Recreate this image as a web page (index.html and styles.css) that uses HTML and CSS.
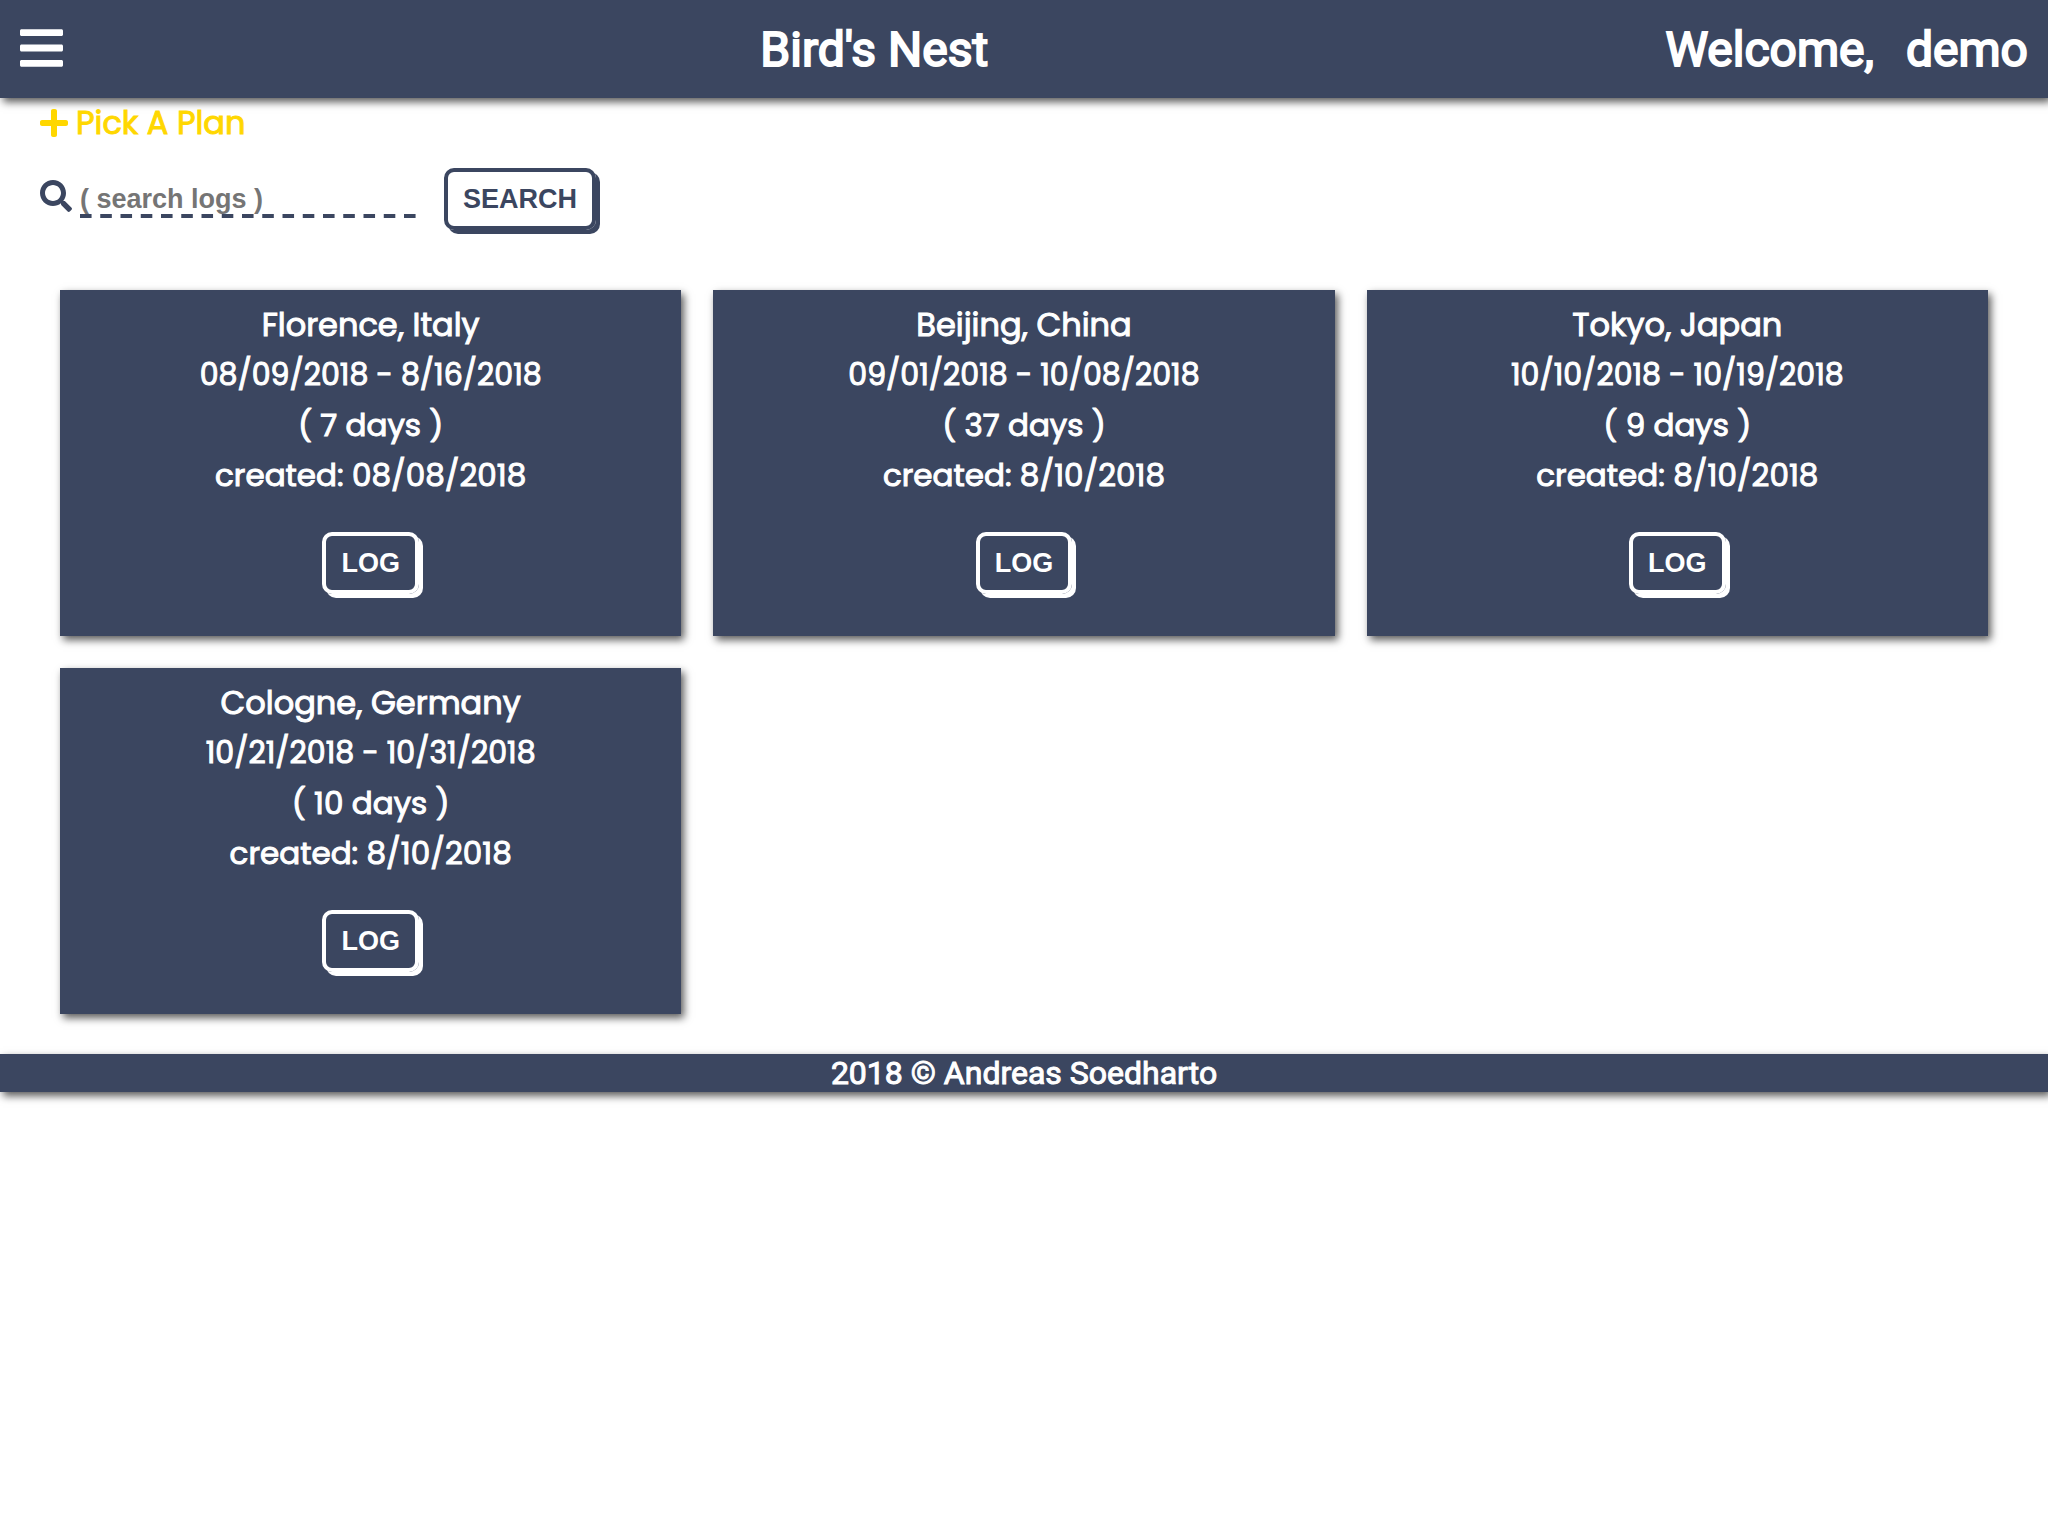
FILE: index.html
```html
<!DOCTYPE html>
<html lang="en">
<head>
<meta charset="utf-8">
<meta name="viewport" content="width=device-width, initial-scale=1">
<title>Bird's Nest</title>
<link rel="stylesheet" href="styles.css">
</head>
<body>
<header class="header">
  <button class="menu" type="button" aria-label="Menu">
    <svg class="menu-icon" viewBox="0 0 448 512" aria-hidden="true"><path d="M16 132h416c8.837 0 16-7.163 16-16V76c0-8.837-7.163-16-16-16H16C7.163 60 0 67.163 0 76v40c0 8.837 7.163 16 16 16zm0 160h416c8.837 0 16-7.163 16-16v-40c0-8.837-7.163-16-16-16H16c-8.837 0-16 7.163-16 16v40c0 8.837 7.163 16 16 16zm0 160h416c8.837 0 16-7.163 16-16v-40c0-8.837-7.163-16-16-16H16c-8.837 0-16 7.163-16 16v40c0 8.837 7.163 16 16 16z"/></svg>
  </button>
  <h1 class="title">Bird's Nest</h1>
  <p class="welcome"><span>Welcome,</span><span>demo</span></p>
</header>
<main>
  <a class="plan" href="#plan">
    <svg class="plan-icon" viewBox="0 0 448 512" aria-hidden="true"><path d="M416 208H272V64c0-17.670-14.330-32-32-32h-32c-17.670 0-32 14.330-32 32v144H32c-17.670 0-32 14.330-32 32v32c0 17.670 14.330 32 32 32h144v144c0 17.670 14.330 32 32 32h32c17.670 0 32-14.330 32-32V304h144c17.670 0 32-14.330 32-32v-32c0-17.670-14.330-32-32-32z"/></svg>
    <span>Pick A Plan</span>
  </a>
  <form class="search">
    <label class="search-label" for="logs" aria-label="Search logs"><svg class="search-icon" viewBox="0 0 512 512" aria-hidden="true"><path d="M505 442.700L405.300 343c-4.500-4.500-10.600-7-17-7H372c27.600-35.300 44-79.700 44-128C416 93.100 322.900 0 208 0S0 93.100 0 208s93.100 208 208 208c48.300 0 92.700-16.400 128-44v16.300c0 6.400 2.500 12.500 7 17l99.700 99.700c9.400 9.400 24.600 9.400 33.900 0l28.300-28.300c9.400-9.400 9.400-24.600.1-34zM208 336c-70.700 0-128-57.200-128-128 0-70.700 57.200-128 128-128 70.700 0 128 57.200 128 128 0 70.700-57.200 128-128 128z"/></svg></label>
    <input class="search-input" id="logs" type="text" placeholder="( search logs )">
    <button class="button" type="submit">SEARCH</button>
  </form>
  <section class="cards">
    <article class="card">
      <p>Florence, Italy</p>
      <p class="card-dates">08/09/2018 - 8/16/2018</p>
      <p class="card-meta">( 7 days )</p>
      <p class="card-meta">created: 08/08/2018</p>
      <button class="button button-light" type="button">LOG</button>
    </article>
    <article class="card">
      <p>Beijing, China</p>
      <p class="card-dates">09/01/2018 - 10/08/2018</p>
      <p class="card-meta">( 37 days )</p>
      <p class="card-meta">created: 8/10/2018</p>
      <button class="button button-light" type="button">LOG</button>
    </article>
    <article class="card">
      <p>Tokyo, Japan</p>
      <p class="card-dates">10/10/2018 - 10/19/2018</p>
      <p class="card-meta">( 9 days )</p>
      <p class="card-meta">created: 8/10/2018</p>
      <button class="button button-light" type="button">LOG</button>
    </article>
    <article class="card">
      <p>Cologne, Germany</p>
      <p class="card-dates">10/21/2018 - 10/31/2018</p>
      <p class="card-meta">( 10 days )</p>
      <p class="card-meta">created: 8/10/2018</p>
      <button class="button button-light" type="button">LOG</button>
    </article>
  </section>
</main>
<footer class="footer">2018 © Andreas Soedharto</footer>
</body>
</html>
```
FILE: styles.css
```css
:root {
  --navy: #3b4660;
  --shadow: 3px 4px 8px rgba(0, 0, 0, 0.65);
}

* {
  box-sizing: border-box;
}

body,
h1,
p {
  margin: 0;
}

body {
  min-height: 100vh;
  background: #fff;
  color: var(--navy);
  font: 400 32px/50px Poppins, Inter, sans-serif;
}

.header {
  display: flex;
  align-items: center;
  justify-content: space-between;
  padding: 21px 20px 19px;
  background: var(--navy);
  box-shadow: var(--shadow);
  color: #fff;
  font: 400 48px/58px Roboto, sans-serif;
  -webkit-text-stroke: 2px;
}

.menu {
  display: flex;
  padding: 0 20px 4px 0;
  border: 0;
  background: none;
  color: inherit;
}

.menu-icon {
  width: 43px;
  height: 50px;
  fill: currentColor;
  stroke: none;
}

.title {
  font: inherit;
}

.welcome {
  display: flex;
  gap: 32px;
}

.plan {
  display: flex;
  align-items: center;
  gap: 8px;
  width: max-content;
  margin-left: 40px;
  color: #ffd700;
  text-decoration: none;
  -webkit-text-stroke: 1px;
}

.plan-icon {
  width: 28px;
  height: 32px;
  fill: currentColor;
}

.search {
  display: flex;
  align-items: center;
  padding: 20px 40px 60px;
}

.search-label {
  display: flex;
  margin-right: 8px;
  padding-bottom: 6px;
}

.search-icon {
  width: 32px;
  height: 32px;
  fill: currentColor;
}

.search-input {
  width: 336px;
  height: 38px;
  margin-right: 28px;
  padding: 0;
  border: 0;
  background: linear-gradient(90deg, var(--navy) 12px, transparent 12px) left bottom / calc((100% - 12px) / 16) 4px repeat-x;
  color: var(--navy);
  font: bold 27px/32px "Liberation Sans", Arial, sans-serif;
}

.search-input::placeholder {
  color: #757575;
}

.button {
  height: 62px;
  padding: 0 15px;
  border: 4px solid var(--navy);
  border-radius: 10px;
  background: none;
  box-shadow: 4px 4px var(--navy);
  color: var(--navy);
  font: bold 27px/32px "Liberation Sans", Arial, sans-serif;
}

.button-light {
  margin-top: 32px;
  border-color: #fff;
  box-shadow: 4px 4px #fff;
  color: #fff;
}

.cards {
  display: grid;
  grid-template-columns: repeat(3, 1fr);
  gap: 32px;
  margin: 0 60px 40px;
}

.card {
  padding: 10px 20px 42px;
  background: var(--navy);
  box-shadow: var(--shadow);
  color: #fff;
  text-align: center;
}

.card p {
  -webkit-text-stroke: 1px;
}

.card-dates {
  font-size: 30px;
}

.card-meta {
  font-size: 31px;
}

.footer {
  background: var(--navy);
  box-shadow: var(--shadow);
  color: #fff;
  font: 400 32px/38px Roboto, sans-serif;
  text-align: center;
  -webkit-text-stroke: 1px;
}
```
